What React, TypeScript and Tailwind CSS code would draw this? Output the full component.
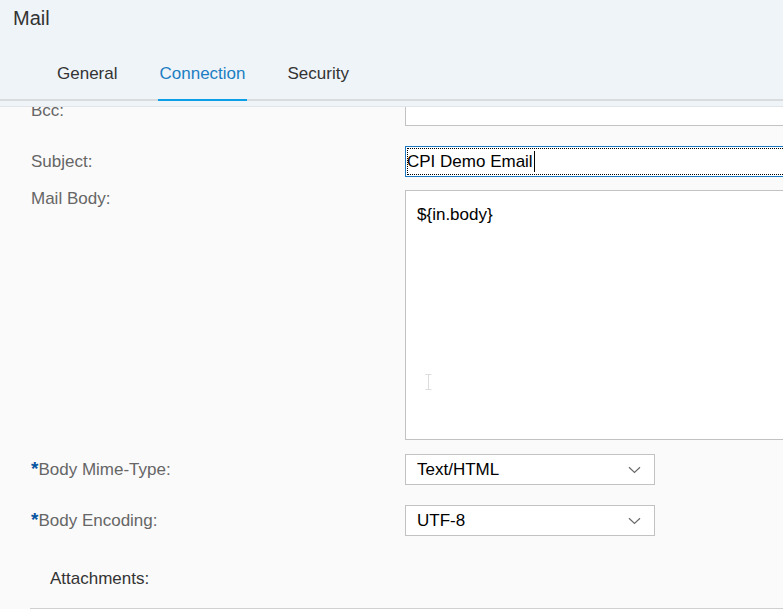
import React from 'react';

const tabs = ['General', 'Connection', 'Security'];

function Chevron() {
  return (
    <svg width="13" height="8" viewBox="0 0 13 8" className="text-[#6a6a6a]">
      <path d="M1 1.2 L6.5 6.5 L12 1.2" fill="none" stroke="currentColor" strokeWidth="1.2" />
    </svg>
  );
}

function Label({ text, required }: { text: string; required?: boolean }) {
  return (
    <div className="w-[405px] shrink-0 pl-[31px] text-[17px] leading-[20px] text-[#666666]">
      {required && <span className="text-[19px] font-bold text-[#0854a0]">*</span>}
      {text}
    </div>
  );
}

function Select({ value }: { value: string }) {
  return (
    <div className="flex h-[31px] w-[250px] shrink-0 items-center justify-between border border-[#c2c2c2] bg-white pl-[11px] pr-[13px] text-[17px] text-black">
      <span>{value}</span>
      <Chevron />
    </div>
  );
}

export default function App() {
  return (
    <div className="flex h-[609px] w-[783px] flex-col overflow-hidden bg-[#fafafa] font-['Liberation_Sans',Arial,sans-serif]">
      <header className="bg-[#eff4f9]">
        <div className="h-[48px] pl-[13px] pt-[6px] text-[20px] leading-[24px] text-[#333333]">Mail</div>
        <div className="flex h-[51px] items-center gap-[42px] pl-[57px] text-[17px] text-[#333333]">
          {tabs.map((t) => (
            <div key={t} className={`relative ${t === 'Connection' ? 'text-[#1b7ec2]' : ''}`}>
              {t}
              {t === 'Connection' && (
                <span className="absolute -left-px -right-px top-[38px] h-[2px] bg-[#0a9fe6]" />
              )}
            </div>
          ))}
        </div>
        <div className="h-[2px] bg-[#d9dcdf]" />
        <div className="h-[6px] border-b border-[#e2e5e8]" />
      </header>

      <div className="flex-1 overflow-hidden">
        <div className="mt-[-11px] flex h-[30px] items-center">
          <Label text="Bcc:" />
          <div className="h-[30px] w-[400px] shrink-0 border border-[#c2c2c2] bg-white" />
        </div>

        <div className="mt-[20px] flex h-[31px] items-center">
          <Label text="Subject:" />
          <div className="flex h-[31px] w-[400px] shrink-0 items-center border border-[#1c78c0] bg-white pl-px text-[17px] text-black outline-1 outline-dotted outline-black outline-offset-[-3px]">
            CPI Demo Email
            <span className="ml-px h-[21px] w-px bg-black" />
          </div>
        </div>

        <div className="mt-[13px] flex items-start">
          <div className="mt-[-1px]">
            <Label text="Mail Body:" />
          </div>
          <div className="relative h-[250px] w-[400px] shrink-0 border border-[#c2c2c2] bg-white pl-[11px] pt-[14px] text-[17px] leading-[20px] text-black">
            ${'{in.body}'}
            <svg width="7" height="16" viewBox="0 0 7 16" className="absolute left-[19px] top-[183px] text-[#dcdcdc]">
              <path d="M0.5 0.5 H6.5 M3.5 0.5 V15.5 M0.5 15.5 H6.5" fill="none" stroke="currentColor" strokeWidth="1" />
            </svg>
          </div>
        </div>

        <div className="mt-[14px] flex h-[31px] items-center">
          <Label text="Body Mime-Type:" required />
          <Select value="Text/HTML" />
        </div>

        <div className="mt-[20px] flex h-[31px] items-center">
          <Label text="Body Encoding:" required />
          <Select value="UTF-8" />
        </div>

        <div className="mt-[33px] h-[20px] pl-[50px] text-[17px] leading-[20px] text-[#333333]">Attachments:</div>

        <div className="ml-[30px] mt-[19px] h-[2px] bg-[#cfcfcf]" />
      </div>
    </div>
  );
}
